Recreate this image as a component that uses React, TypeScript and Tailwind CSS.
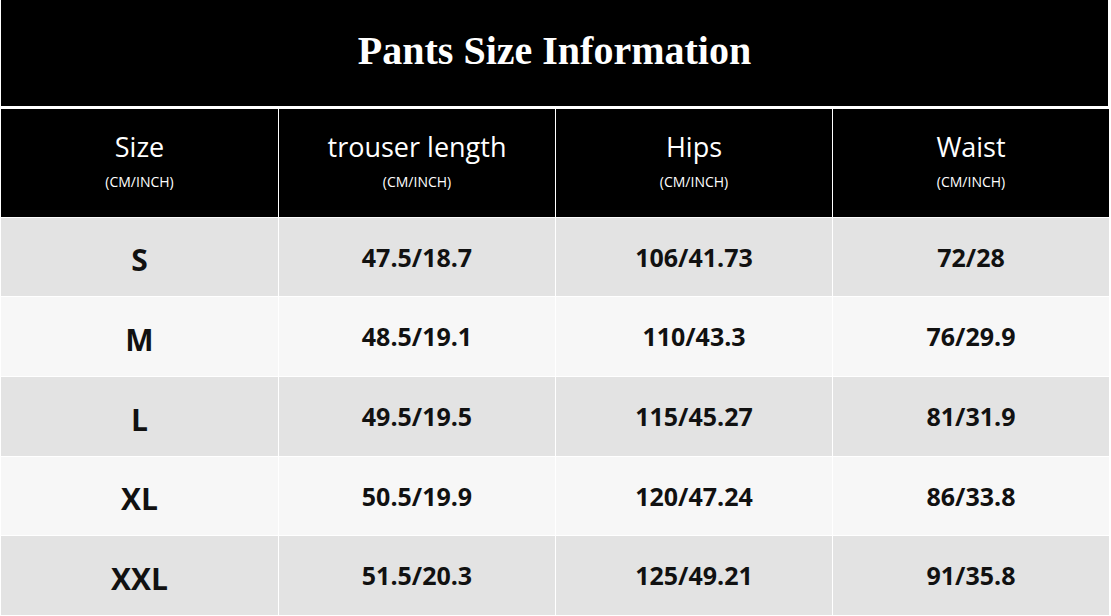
import React from "react";

const headers = ["Size", "trouser length", "Hips", "Waist"];
const rows = [
  ["S", "47.5/18.7", "106/41.73", "72/28"],
  ["M", "48.5/19.1", "110/43.3", "76/29.9"],
  ["L", "49.5/19.5", "115/45.27", "81/31.9"],
  ["XL", "50.5/19.9", "120/47.24", "86/33.8"],
  ["XXL", "51.5/20.3", "125/49.21", "91/35.8"],
];
const heights = ["h-[78px]", "h-[79px]", "h-[79px]", "h-[78px]", "h-[79px]"];

export default function App() {
  return (
    <div className="w-[1111px] h-[616px] bg-white overflow-hidden" style={{ fontFamily: '"Open Sans", "Noto Sans", sans-serif' }}>
      <div className="ml-[1px] w-[1107px] h-[106px] bg-black flex items-center justify-center">
        <h1 className="text-white font-bold text-[40px] leading-none pb-[4px]" style={{ fontFamily: '"Liberation Serif", "DejaVu Serif", serif' }}>
          Pants Size Information
        </h1>
      </div>
      <div className="h-[3px]" />
      <div className="ml-[1px] grid grid-cols-[277px_276px_276px_276px] gap-[1px] w-[1108px]">
        {headers.map((h) => (
          <div key={h} className="h-[108px] bg-black flex flex-col items-center justify-center text-white">
            <div className="text-[27px] leading-none pb-[6px]">{h}</div>
            <div className="text-[14px] leading-none mt-[9px] pb-[4px]">(CM/INCH)</div>
          </div>
        ))}
        {rows.map((r, i) =>
          r.map((c, j) => (
            <div
              key={i + "-" + j}
              className={`${heights[i]} ${i % 2 === 0 ? "bg-[#e3e3e3]" : "bg-[#f7f7f7]"} flex items-center justify-center text-[#111]`}
            >
              {j === 0 ? (
                <span className="text-[30px] font-bold leading-none pt-[6px]">{c}</span>
              ) : (
                <span className="text-[25px] font-bold leading-none">{c}</span>
              )}
            </div>
          ))
        )}
      </div>
    </div>
  );
}
